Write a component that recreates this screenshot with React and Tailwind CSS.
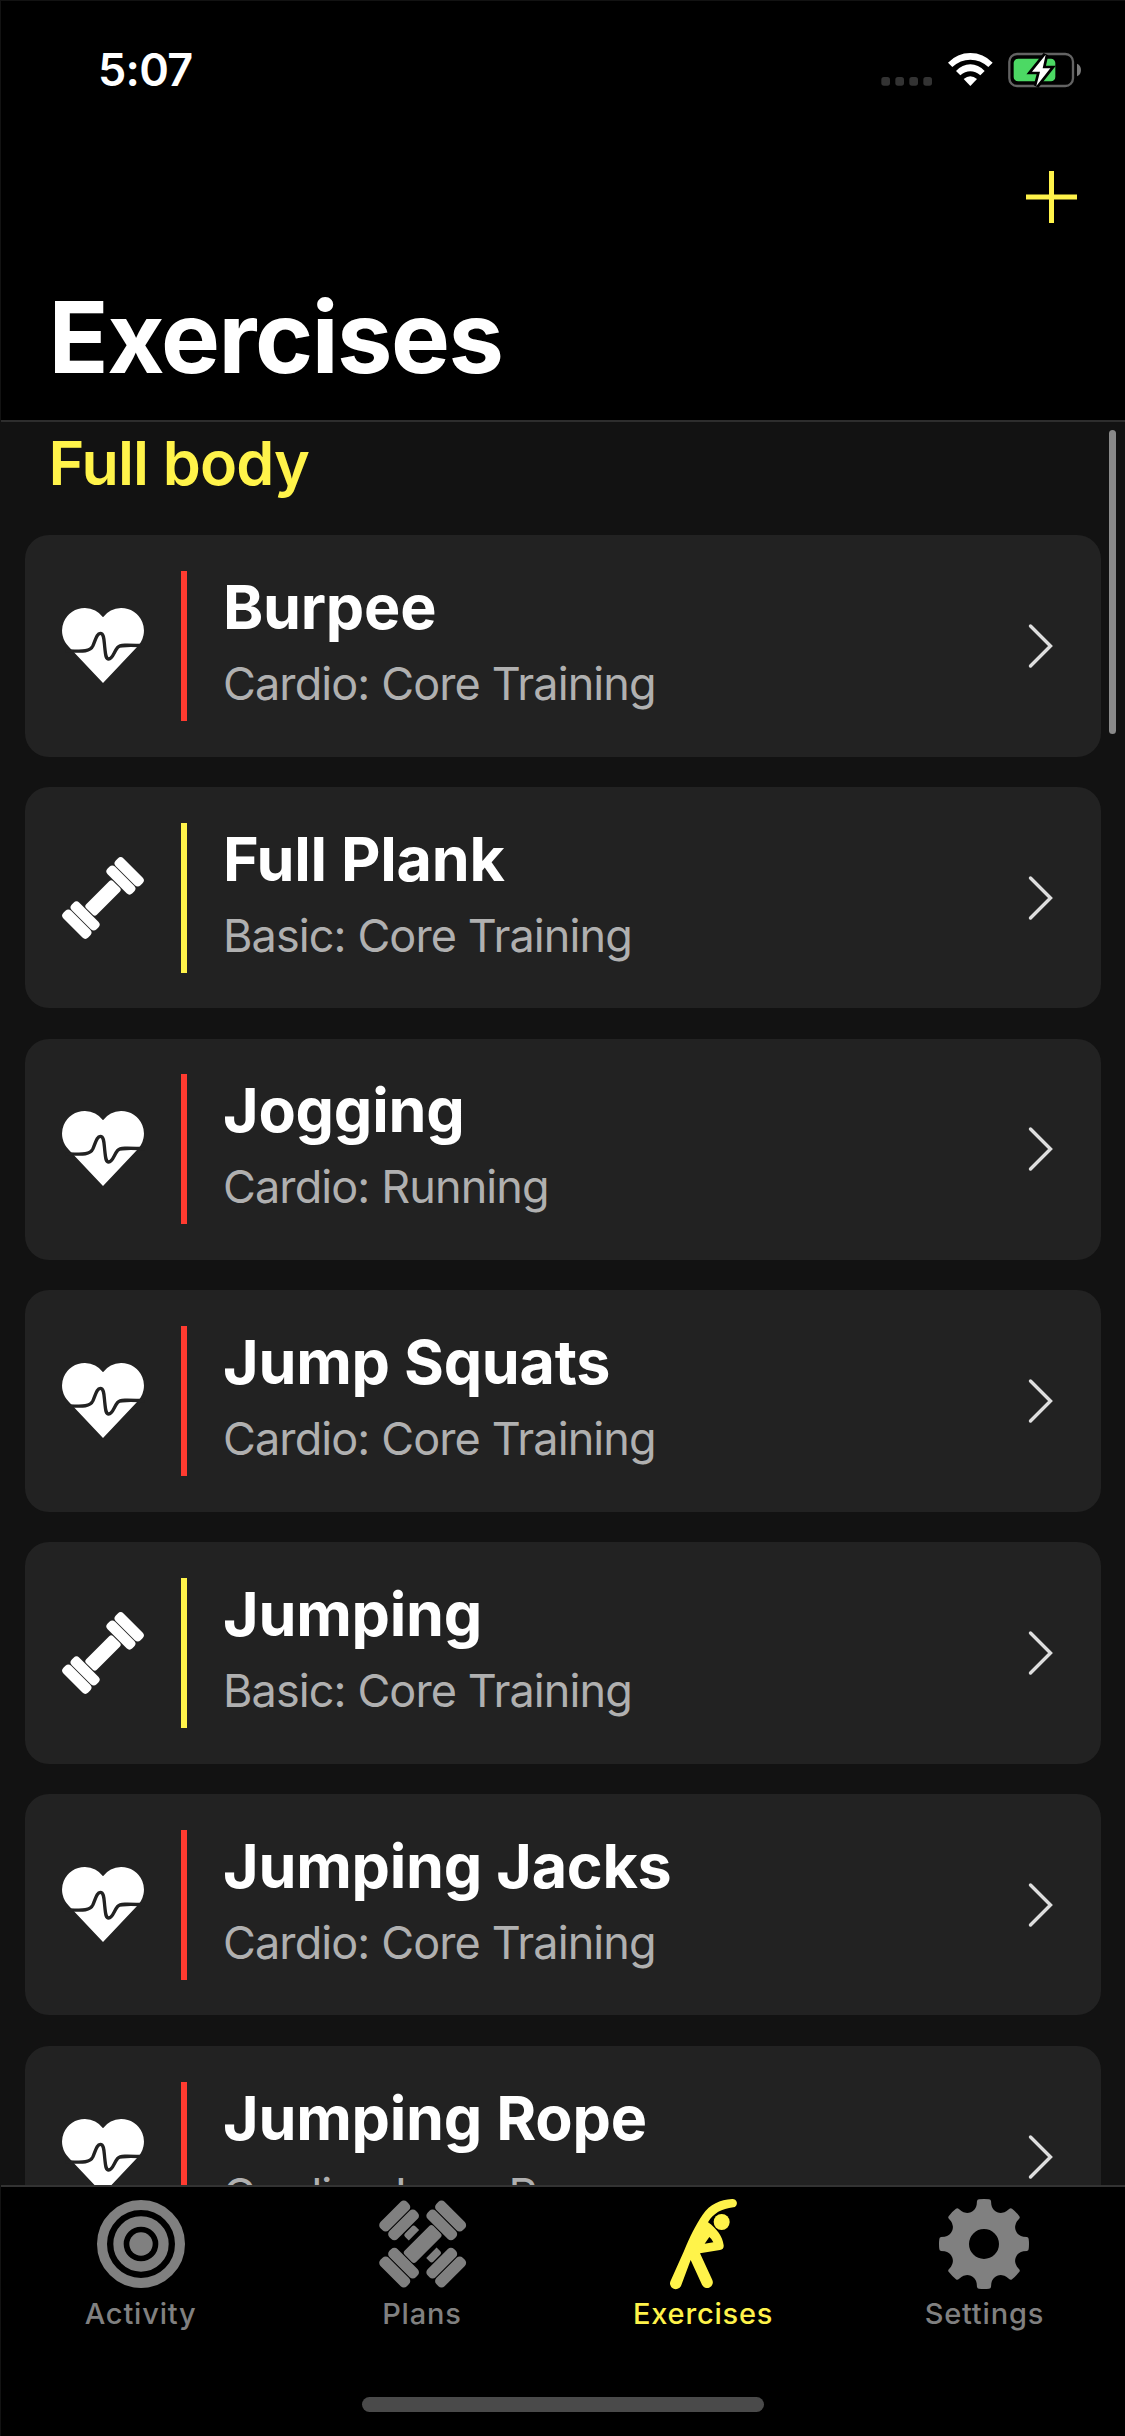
const exercises = [
  { name: 'Burpee', detail: 'Cardio: Core Training', type: 'cardio' },
  { name: 'Full Plank', detail: 'Basic: Core Training', type: 'basic' },
  { name: 'Jogging', detail: 'Cardio: Running', type: 'cardio' },
  { name: 'Jump Squats', detail: 'Cardio: Core Training', type: 'cardio' },
  { name: 'Jumping', detail: 'Basic: Core Training', type: 'basic' },
  { name: 'Jumping Jacks', detail: 'Cardio: Core Training', type: 'cardio' },
  { name: 'Jumping Rope', detail: 'Cardio: Jump Rope', type: 'cardio' },
];

function HeartIcon() {
  return (
    <svg className="h-[90px] w-[90px]" viewBox="114 213 270 270">
      <path
        fill="#fff"
        d="M249 262 A68.500 68.500 0 0 0 195 234 A68 68 0 0 0 147 351 L249 459 L351 351 A68 68 0 0 0 303 234 A68.500 68.500 0 0 0 249 262 Z"
      />
      <path
        fill="none"
        stroke="#222"
        strokeWidth="10"
        d="M136 362 C185 364 210 367 219 347 C228 325 231 310 241 310 C252 310 252 330 254 350 C257 375 257 387 266 387 C278 387 282 365 293 352 C301 343 325 345 374 347"
      />
    </svg>
  );
}

// one end of a dumbbell, two plates
function Plates() {
  return (
    <>
      <rect x="64" y="-56" width="34" height="112" rx="13" />
      <rect x="101" y="-56" width="35" height="112" rx="13" />
    </>
  );
}

function Dumbbell({ split }) {
  return (
    <>
      <Plates />
      <g transform="rotate(180)"><Plates /></g>
      {split ? (
        <>
          <path d="M37 -22 H52 Q60 -22 60 -14 V14 Q60 22 52 22 H37 Z" />
          <path d="M-37 -22 H-52 Q-60 -22 -60 -14 V14 Q-60 22 -52 22 H-37 Z" />
        </>
      ) : (
        <rect x="-61" y="-24" width="122" height="48" rx="9" />
      )}
    </>
  );
}

function DumbbellIcon() {
  return (
    <svg className="h-[90px] w-[90px]" viewBox="-144 -144 288 288" fill="#fff">
      <g transform="rotate(-45)"><Dumbbell /></g>
    </svg>
  );
}

function ActivityIcon() {
  return (
    <svg className="h-24 w-24" viewBox="-144 -144 288 288" fill="none" stroke="currentColor">
      <circle r="117" strokeWidth="30" />
      <circle r="67.500" strokeWidth="31" />
      <circle r="35" fill="currentColor" stroke="none" />
    </svg>
  );
}

function PlansIcon() {
  return (
    <svg className="h-24 w-24" viewBox="-146 -144 288 288" fill="currentColor">
      <g transform="rotate(-45)"><Dumbbell /></g>
      <g transform="rotate(45)"><Dumbbell split /></g>
    </svg>
  );
}

function StretchIcon() {
  return (
    <svg className="h-24 w-24" viewBox="105 48 288 288" fill="currentColor">
      <path
        fillRule="evenodd"
        d="M336 57 C300 60 270 72 248 104 C226 136 210 170 192 213 L152 302 A17 17 0 0 0 183 318 L212 240 L246 314 A17 17 0 0 0 277 300 L240 220 L300 210 Q312 207 311 196 C308 170 290 145 264 127 C280 100 305 86 340 82 A12.500 12.500 0 0 0 336 57 Z M254 191 L268 171 Q276 177 280 187 Z"
      />
      <circle cx="305" cy="126" r="24" />
    </svg>
  );
}

function gearPath() {
  let d = '';
  for (let i = 0; i < 8; i++) {
    const a = (i * Math.PI) / 4;
    const p = (x, y) => `${(x * Math.cos(a) - y * Math.sin(a)).toFixed(1)} ${(x * Math.sin(a) + y * Math.cos(a)).toFixed(1)}`;
    d += i === 0 ? `M${p(-22, -118)}` : `A29 29 0 0 0 ${p(-22, -118)}`;
    d += `L${p(-21, -129)}Q${p(-20, -134)} ${p(-15, -134)}Q${p(0, -136)} ${p(15, -134)}Q${p(20, -134)} ${p(21, -129)}L${p(22, -118)}`;
  }
  return d + 'A29 29 0 0 0 -22 -118Z M45 0A45 45 0 1 0 -45 0A45 45 0 1 0 45 0Z';
}

function SettingsIcon() {
  return (
    <svg className="h-24 w-24" viewBox="-144 -144 288 288" fill="currentColor">
      <path fillRule="evenodd" d={gearPath()} />
    </svg>
  );
}

function StatusIcons() {
  return (
    <svg className="h-10 w-[205px]" viewBox="60 60 615 120">
      {[64, 106, 148, 190].map((x) => (
        <rect key={x} x={x} y="141" width="26" height="26" rx="8" fill="#333" />
      ))}
      {/* wifi */}
      <g fill="#fff">
        <path d="M264 98 Q292 69 331 69 Q370 69 398 98 L385 111 Q361 89 331 89 Q301 89 277 111 Z" />
        <path d="M288 123 Q307 103 331 103 Q355 103 374 123 L361 136 Q347 124 331 124 Q315 124 301 136 Z" />
        <path d="M311 147 Q331 131 351 147 L331 168 Z" />
      </g>
      {/* battery */}
      <rect x="448" y="72" width="191" height="96" rx="23" fill="none" stroke="#636363" strokeWidth="7" />
      <path d="M651 101 Q663 106 663 120 Q663 134 651 139 Z" fill="#7a7a7a" />
      <rect x="461" y="86" width="125" height="68" rx="13" fill="#4cd964" />
      <path
        d="M557 74 L516 125 H540 L529 168 L571 115 H548 Z"
        fill="#fff"
        stroke="#000"
        strokeWidth="16"
        paintOrder="stroke"
      />
    </svg>
  );
}

function ExerciseCard({ name, detail, type }) {
  return (
    <div className="flex h-[221.5px] shrink-0 items-center rounded-[24px] bg-[#222222] pl-[33px] pr-[46px]">
      {type === 'cardio' ? <HeartIcon /> : <DumbbellIcon />}
      <div className={`ml-[32.5px] h-[150px] w-[6px] ${type === 'cardio' ? 'bg-[#ff3b30]' : 'bg-[#fff34a]'}`} />
      <div className="ml-[36.5px] flex h-[150px] flex-1 flex-col whitespace-nowrap">
        <div className="text-[61px] font-bold leading-[72px] tracking-[-0.25px] text-white">{name}</div>
        <div className="mt-[14px] text-[45px] leading-[54px] tracking-[-0.9px] text-[#b0b0b0]">{detail}</div>
      </div>
      <svg className="h-[48px] w-[30px]" viewBox="0 0 30 48" fill="none" stroke="#dedede" strokeWidth="3.400" strokeLinecap="round">
        <path d="M5.500 4 L25.500 24 L5.500 44" />
      </svg>
    </div>
  );
}

function Tab({ label, active, children }) {
  return (
    <div className={`flex flex-1 flex-col items-center ${active ? 'text-[#fff34a]' : 'text-[#808080]'}`}>
      {children}
      <span className="mt-1 text-[29px] font-medium leading-9 tracking-[0.8px]">{label}</span>
    </div>
  );
}

export default function App() {
  return (
    <div className="relative flex h-[2436px] w-[1125px] flex-col overflow-hidden bg-[#121212] font-['Inter',sans-serif]">
      <header className="flex h-[422px] shrink-0 flex-col border-b-2 border-[#2d2d2d] bg-black">
        <div className="flex h-[140px] items-start justify-between pl-[98px] pr-[40px] pt-[50px]">
          <span className="text-[45px] font-semibold leading-10 tracking-[-0.7px] text-white">5:07</span>
          <StatusIcons />
        </div>
        <div className="flex justify-end pr-12 pt-[31px]">
          <svg className="h-[52px] w-[51px]" viewBox="0 0 51 52" stroke="#fff34a" strokeWidth="5">
            <path d="M0 26 H51 M25.500 0 V52" />
          </svg>
        </div>
        <h1 className="mt-[54px] pl-[48.5px] text-[99px] font-bold leading-[120px] tracking-[-1.5px] text-white">Exercises</h1>
      </header>

      <main className="flex min-h-0 flex-1 flex-col overflow-hidden pl-[25px] pr-[24px]">
        <h2 className="h-[113px] shrink-0 pl-[23.5px] pt-[5px] text-[61px] font-semibold leading-[72px] tracking-[-0.85px] text-[#fff34a]">Full body</h2>
        <div className="flex flex-col gap-[30.3px]">
          {exercises.map((e) => (
            <ExerciseCard key={e.name} {...e} />
          ))}
        </div>
      </main>

      <nav className="flex h-[251px] shrink-0 flex-col justify-between border-t-2 border-[#333333] bg-black pb-6 pt-[9px]">
        <div className="flex">
          <Tab label="Activity"><ActivityIcon /></Tab>
          <Tab label="Plans"><PlansIcon /></Tab>
          <Tab label="Exercises" active><StretchIcon /></Tab>
          <Tab label="Settings"><SettingsIcon /></Tab>
        </div>
        <div className="h-[15px] w-[402px] self-center rounded-full bg-[#4a4a4a]" />
      </nav>

      {/* scroll indicator */}
      <div className="absolute left-[1109px] top-[430px] h-[304px] w-[7px] rounded-full bg-[#8a8a8a]" />
      {/* screen edge */}
      <div className="pointer-events-none absolute inset-0 border-l border-t border-[#121212]" />
    </div>
  );
}
